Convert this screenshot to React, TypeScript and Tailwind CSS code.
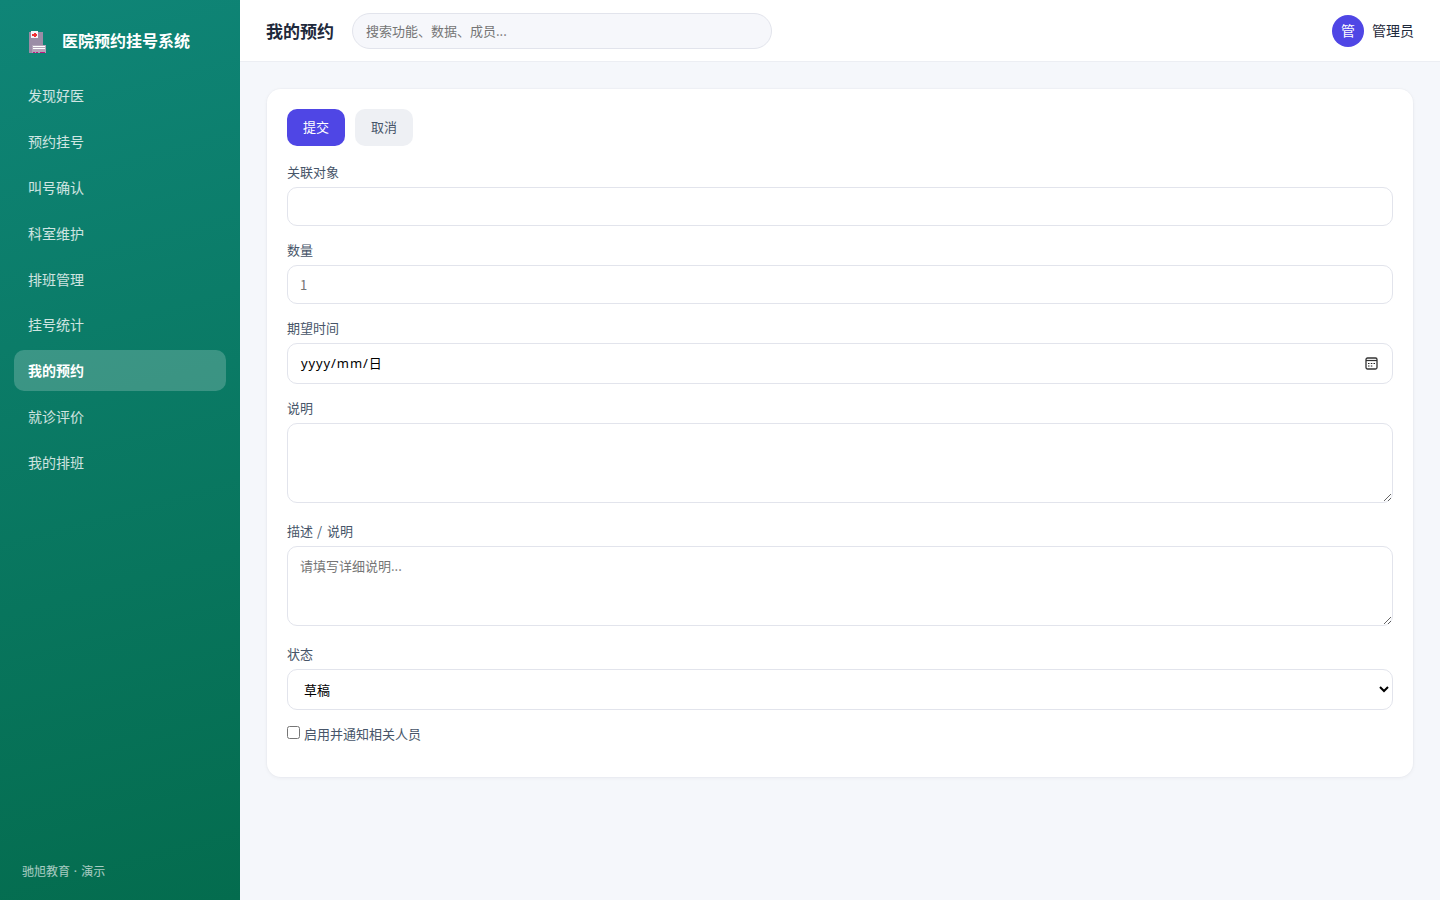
import type { ReactNode } from 'react';

const navItems = ['发现好医', '预约挂号', '叫号确认', '科室维护', '排班管理', '挂号统计', '我的预约', '就诊评价', '我的排班'];

const control =
  'block w-full rounded-[10px] border border-[#e2e4ec] bg-white px-3 text-[13px] text-black placeholder:text-[#757575] outline-none';

function HospitalIcon() {
  return (
    <svg className="mt-[5px]" width="18" height="23" viewBox="0 0 18 23" shapeRendering="crispEdges" aria-hidden="true">
      <path d="M0 1h14v21H0z" fill="#9b8ca6" />
      <path d="M2 0h7v7H2z" fill="#f5f3f8" />
      <path d="M5 2h2v1h1v2H7v1H5V5H3V3h2z" fill="#f22f35" />
      <path d="M3 14h14v8H3z" fill="#b3a5b9" />
      <path d="M4 15h12v1H4zM4 17h12v1H4z" fill="#fff" />
      <path d="M4 21h2v1H4zM7 21h2v1H7zM11 21h5v1h-5z" fill="#c2187e" />
    </svg>
  );
}

function CalendarIcon() {
  return (
    <svg width="13" height="13" viewBox="0 0 13 13" fill="none" aria-hidden="true">
      <rect x="1" y="1" width="11" height="11" rx="1.5" stroke="#333" strokeWidth="1.3" />
      <path d="M1 3.5h11" stroke="#333" strokeWidth="1.2" />
      <path d="M3 6.5h1.5M5.8 6.5h1.5M8.5 6.5H10M3 9h1.5M5.8 9h1.5" stroke="#222" strokeWidth="1.1" />
    </svg>
  );
}

function Field({ label, children }: { label: ReactNode; children: ReactNode }) {
  return (
    <div className="mb-3.5">
      <div className="mb-[5px] h-5 text-[13px] leading-[19px] text-[#475569]">{label}</div>
      {children}
    </div>
  );
}

export default function App() {
  return (
    <div className="flex h-screen w-full overflow-hidden bg-[#f5f7fb] font-['Noto_Sans_CJK_SC',sans-serif] text-[#1e293b]">
      <aside className="flex w-60 shrink-0 flex-col bg-[linear-gradient(165deg,#0f8577_0%,#046c4e_100%)] px-3.5 pb-[18px]">
        <div className="flex h-[75px] shrink-0 items-center pt-[5px] pl-[15px]">
          <HospitalIcon />
          <span className="ml-[15px] text-[16px] leading-6 font-bold text-white">医院预约挂号系统</span>
        </div>
        <nav className="flex flex-col gap-[5px]">
          {navItems.map((item) => (
            <a
              key={item}
              className={
                item === '我的预约'
                  ? 'flex h-[40.9px] items-center rounded-[10px] bg-white/20 px-3.5 text-[14px] font-bold text-white'
                  : 'flex h-[40.9px] items-center rounded-[10px] px-3.5 text-[14px] text-white/80'
              }
            >
              {item}
            </a>
          ))}
        </nav>
        <div className="mt-auto pl-2 text-[12px] leading-5 text-white/65">
          驰旭教育<span className="font-['Noto_Sans',sans-serif] tracking-[0.6px]">{' · '}</span>演示
        </div>
      </aside>

      <div className="flex min-w-0 flex-1 flex-col">
        <header className="flex h-[62px] shrink-0 items-center border-b border-[#eceef3] bg-white px-[26px]">
          <h1 className="w-[68px] text-[17px] leading-6 font-bold whitespace-nowrap">我的预约</h1>
          <input
            className="ml-[18px] h-9 w-[420px] rounded-full border border-[#e2e4ec] bg-[#f6f7fb] px-[13px] text-[13px] outline-none placeholder:text-[#757575]"
            placeholder="搜索功能、数据、成员..."
          />
          <div className="ml-auto flex items-center gap-2">
            <div className="flex size-8 items-center justify-center rounded-full bg-[#4f46e5] text-[14px] text-white">管</div>
            <span className="text-[14px]">管理员</span>
          </div>
        </header>

        <main className="px-[27px] pt-[27px]">
          <section className="h-[688px] rounded-[14px] bg-white p-5 shadow-[0_0_0_1px_rgba(15,23,42,0.015),0_1px_4px_rgba(15,23,42,0.05)]">
            <div className="mb-4 flex gap-2.5">
              <button className="h-[37px] w-[58px] rounded-[10px] bg-[#4f46e5] pb-px text-[13px] text-white">提交</button>
              <button className="h-[37px] w-[58px] rounded-[10px] bg-[#eef0f4] pb-px text-[13px] text-[#475569]">取消</button>
            </div>
            <Field label="关联对象">
              <input className={`${control} h-[39px]`} />
            </Field>
            <Field label="数量">
              <input className={`${control} h-[39px]`} placeholder="1" />
            </Field>
            <Field label="期望时间">
              <div className={`${control} h-[41px]`}>
                <div className="flex h-full items-center justify-between pr-0.5 pl-px">
                  <span>
                    <span className="font-['Noto_Sans',sans-serif] text-[13px] tracking-[0.9px]">yyyy/mm/</span>日
                  </span>
                  <CalendarIcon />
                </div>
              </div>
            </Field>
            <Field label="说明">
              <textarea className={`${control} h-20 min-h-20 resize-y py-[9px]`} />
            </Field>
            <div className="h-[4px]" />
            <Field
              label={
                <>
                  描述<span className="tracking-[1px]">{' / '}</span>说明
                </>
              }
            >
              <textarea className={`${control} h-20 min-h-20 resize-y py-[9px]`} placeholder="请填写详细说明..." />
            </Field>
            <div className="h-[4px]" />
            <Field label="状态">
              <select className={`${control} h-[41px] pb-px`} defaultValue="草稿">
                <option>草稿</option>
              </select>
            </Field>
            <label className="flex h-5 items-center text-[13px] text-[#475569]">
              <input type="checkbox" className="mr-1 mb-[3px] size-[13px]" />
              启用并通知相关人员
            </label>
          </section>
        </main>
      </div>
    </div>
  );
}
